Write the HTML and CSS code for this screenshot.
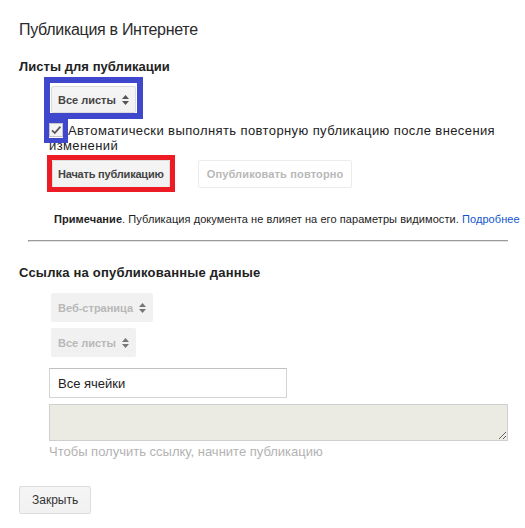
FILE: index.html
```html
<!DOCTYPE html>
<html lang="ru">
<head>
<meta charset="utf-8">
<title>Публикация в Интернете</title>
<link rel="stylesheet" href="styles.css">
</head>
<body>
<div class="dialog">
  <h1 class="title">Публикация в Интернете</h1>
  <h2 class="section-title">Листы для публикации</h2>
  <div class="select-row">
    <div class="select mark-blue">Все листы<svg class="arrows" viewBox="0 0 7 10"><path d="M3.5 0L7 4H0z M0 6h7L3.5 10z"/></svg></div>
  </div>
  <div class="auto-row"><span class="checkbox mark-blue-sm"><svg viewBox="0 0 12 12" class="tick"><path d="M2 6.4L4.8 9L10.4 2.6"/></svg></span>Автоматически выполнять повторную публикацию после внесения изменений</div>
  <div class="buttons">
    <div class="mark-red"><button class="btn btn-start">Начать публикацию</button></div>
    <button class="btn btn-disabled">Опубликовать повторно</button>
  </div>
  <p class="note"><b>Примечание</b>. Публикация документа не влияет на его параметры видимости. <a class="link" href="#">Подробнее</a></p>
  <hr class="divider">
  <h2 class="section-title second">Ссылка на опубликованные данные</h2>
  <div class="link-options">
    <div class="select disabled first">Веб-страница<svg class="arrows" viewBox="0 0 7 10"><path d="M3.5 0L7 4H0z M0 6h7L3.5 10z"/></svg></div>
    <div class="select disabled next">Все листы<svg class="arrows" viewBox="0 0 7 10"><path d="M3.5 0L7 4H0z M0 6h7L3.5 10z"/></svg></div>
    <input class="cells" type="text" value="Все ячейки">
    <textarea class="link-box" disabled></textarea>
    <div class="hint">Чтобы получить ссылку, начните публикацию</div>
  </div>
  <button class="btn close">Закрыть</button>
</div>
</body>
</html>
```

FILE: styles.css
```css
html, body {
  margin: 0;
  background: #fff;
  overflow: hidden;
}
body {
  font-family: "Liberation Sans", Arial, sans-serif;
  color: #222;
}
.dialog {
  width: 525px;
  box-sizing: border-box;
  padding: 20px 0 0 19px;
}
.title {
  margin: 0;
  font-size: 16px;
  line-height: 20px;
  font-weight: normal;
  color: #2a2a2a;
  letter-spacing: -0.3px;
}
.section-title {
  margin: 19px 0 0;
  font-size: 13px;
  line-height: 16px;
  font-weight: bold;
  color: #222;
  letter-spacing: 0.05px;
}
.section-title.second {
  margin-top: 23px;
  letter-spacing: 0.2px;
}
.select-row {
  margin-top: 11px;
  padding-left: 32px;
}
.select {
  position: relative;
  display: inline-flex;
  align-items: center;
  height: 27px;
  box-sizing: border-box;
  padding: 0 6px;
  border: 1px solid #dcdcdc;
  border-radius: 2px;
  background: linear-gradient(#f5f5f5, #f1f1f1);
  font-size: 11px;
  font-weight: bold;
  color: #444;
  white-space: nowrap;
}
.arrows {
  width: 7px;
  height: 10px;
  margin-left: 6px;
  fill: #555;
}
.mark-blue::after {
  content: "";
  position: absolute;
  left: -8px;
  top: -10px;
  right: -8px;
  bottom: -7px;
  border: 6px solid #3f48cc;
}
.auto-row {
  margin-top: 10px;
  padding-left: 30px;
  font-size: 13px;
  line-height: 15px;
  color: #222;
  letter-spacing: 0.4px;
}
.checkbox {
  position: relative;
  display: inline-block;
  width: 14px;
  height: 14px;
  box-sizing: border-box;
  border: 1px solid #c6c6c6;
  background: #f4f4f4;
  vertical-align: -2px;
  margin-right: 5px;
}
.tick {
  display: block;
  width: 12px;
  height: 12px;
  fill: none;
  stroke: #5a5a5a;
  stroke-width: 1.8;
}
.mark-blue-sm::after {
  content: "";
  position: absolute;
  left: -6px;
  top: -6px;
  right: -6px;
  bottom: -7px;
  border: 5px solid #3f48cc;
}
.buttons {
  margin-top: 7px;
  padding-left: 33px;
  display: flex;
  gap: 28px;
  align-items: flex-start;
}
.btn {
  display: block;
  height: 28px;
  box-sizing: border-box;
  padding: 0 8px;
  border: 1px solid #dcdcdc;
  border-radius: 2px;
  background: linear-gradient(#f5f5f5, #f1f1f1);
  font-family: "Liberation Sans", Arial, sans-serif;
  font-size: 11px;
  font-weight: bold;
  color: #444;
  white-space: nowrap;
}
.btn-start {
  padding: 0 5px;
  letter-spacing: -0.2px;
}
.btn-disabled {
  background: #fff;
  border-color: #ececec;
  color: #b8b8b8;
  letter-spacing: 0.15px;
}
.mark-red {
  position: relative;
}
.mark-red::after {
  content: "";
  position: absolute;
  left: -5px;
  top: -5px;
  right: -5px;
  bottom: -4px;
  border: 5px solid #ed1c24;
}
.note {
  margin: 25px 0 0;
  padding-left: 35px;
  font-size: 11px;
  line-height: 13px;
  color: #222;
  white-space: nowrap;
  letter-spacing: 0.07px;
}
.link {
  color: #15c;
  text-decoration: none;
}
.divider {
  margin: 14px 0 0 9px;
  width: 479px;
  height: 0;
  border: 0;
  border-top: 1px solid #9a9a9a;
  border-left: 1px solid #9a9a9a;
  border-bottom: 1px solid #e4e4e4;
}
.link-options {
  padding-left: 30px;
  display: flex;
  flex-direction: column;
  align-items: flex-start;
}
.select.disabled {
  height: 29px;
  margin-left: 2px;
  border-color: transparent;
  background: #f1f1f1;
  color: #b8b8b8;
}
.select.disabled .arrows {
  fill: #777;
}
.select.first {
  margin-top: 12px;
}
.select.next {
  margin-top: 6px;
}
.cells {
  margin: 11px 0 0;
  width: 238px;
  height: 30px;
  box-sizing: border-box;
  padding: 0 8px;
  border: 1px solid #d4d4d4;
  border-top-color: #c0c0c0;
  font-family: "Liberation Sans", Arial, sans-serif;
  font-size: 13px;
  color: #222;
  outline: none;
}
.link-box {
  display: block;
  margin: 6px 0 0;
  width: 459px;
  height: 37px;
  box-sizing: border-box;
  padding: 0;
  border: 1px solid #cfcfcf;
  background: #ebebe4;
}
.hint {
  margin-top: 3px;
  font-size: 13px;
  line-height: 15px;
  color: #b3b3b3;
}
.btn.close {
  margin-top: 27px;
  padding: 0 12px;
  font-size: 12px;
  font-weight: normal;
  color: #333;
}
```
